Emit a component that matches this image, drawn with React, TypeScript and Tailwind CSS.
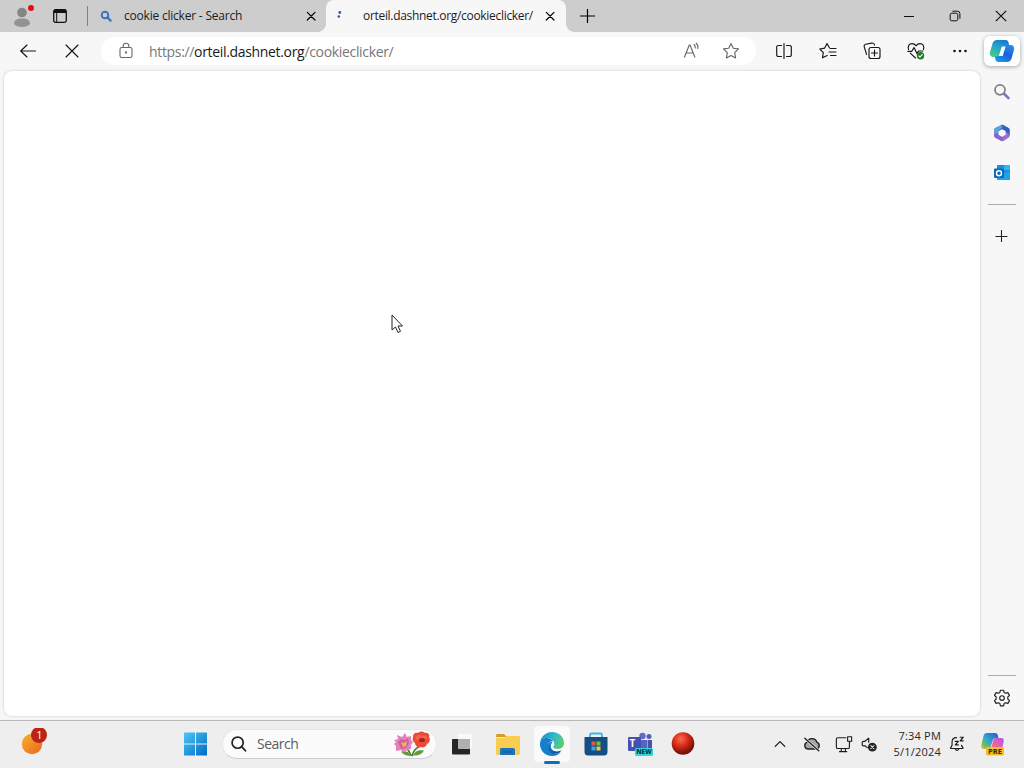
import type { ReactNode } from "react";

type IconProps = {
  size?: number;
  className?: string;
  children: ReactNode;
};

// Thin outlined icon, 20x20 grid
function Icon({ size = 20, className = "", children }: IconProps) {
  return (
    <svg
      width={size}
      height={size}
      viewBox="0 0 20 20"
      fill="none"
      stroke="currentColor"
      strokeWidth="1.15"
      strokeLinecap="round"
      strokeLinejoin="round"
      className={`shrink-0 ${className}`}
    >
      {children}
    </svg>
  );
}

const STAR =
  "M10 2.4l2.3 4.8 5.2.7-3.8 3.7.9 5.3-4.6-2.5-4.6 2.5.9-5.3-3.8-3.7 5.2-.7z";

function CloseIcon() {
  return (
    <Icon size={16}>
      <path d="M5.400 5.400l9.600 9.600M15 5.400l-9.600 9.600" strokeWidth="1.5" />
    </Icon>
  );
}

function TabBar() {
  return (
    <header className="flex h-8 w-full shrink-0 bg-[#cdcdcd]">
      <div className="flex w-[87px] items-center pl-3">
        <svg width="24" height="28" viewBox="0 0 24 28">
          <circle cx="10" cy="10.500" r="4.800" fill="#858585" />
          <path d="M2 22c0-4 3-5.500 8-5.500s8 1.500 8 5.500c-2 2.300-5 3-8 3s-6-.7-8-3z" fill="#929292" />
          <circle cx="19" cy="6" r="3" fill="#e60d12" />
        </svg>
        <svg width="14" height="14" viewBox="0 0 14 14" className="ml-[17px]">
          <rect x=".7" y=".7" width="12.600" height="12.600" rx="1.800" fill="none" stroke="#111" strokeWidth="1.300" />
          <path d="M1 1h12v3H1z" fill="#111" />
          <path d="M3.700 4v9" stroke="#111" strokeWidth="1" />
        </svg>
      </div>
      <div className="mt-1.5 h-5 w-px bg-[#808080]" />
      <div className="flex w-[238px] items-center pl-[11px]">
        <svg width="14" height="14" viewBox="0 0 14 14" fill="none" stroke="#3b72c0">
          <circle cx="6" cy="6" r="3.300" strokeWidth="1.900" />
          <path d="M8.600 8.600l3 3" strokeWidth="2.200" strokeLinecap="round" />
        </svg>
        <span className="ml-[11px] w-[179px] text-[12px] tracking-[-0.21px] text-[#1c1c1c]">
          cookie clicker - Search
        </span>
        <CloseIcon />
      </div>
      <div className="relative flex w-[240px] items-center rounded-t-lg bg-[#f7f7f7] pl-[9px]">
        <span className="absolute bottom-0 -left-2 size-2 bg-[radial-gradient(circle_at_0_0,#cdcdcd_7.5px,#f7f7f7_8px)]" />
        <span className="absolute -right-2 bottom-0 size-2 bg-[radial-gradient(circle_at_100%_0,#cdcdcd_7.5px,#f7f7f7_8px)]" />
        <svg width="8" height="12" viewBox="0 0 8 12" fill="#2b5d94">
          <circle cx="4.800" cy="2.500" r="1.400" />
          <circle cx="3.800" cy="6.500" r="1.300" />
        </svg>
        <span className="ml-5 w-[179px] text-[12px] tracking-[-0.31px] text-[#1c1c1c]">
          orteil.dashnet.org/cookieclicker/
        </span>
        <CloseIcon />
      </div>
      <div className="flex flex-1 items-center pl-[13px] text-black">
        <svg width="16" height="16" viewBox="0 0 16 16" stroke="currentColor" strokeWidth="1.200">
          <path d="M8.500 1v14M1 8h15" />
        </svg>
      </div>
      <div className="flex text-[#111]">
        <div className="flex w-[46px] items-center justify-center">
          <span className="h-px w-2.5 bg-[#111]" />
        </div>
        <div className="flex w-[46px] items-center justify-center">
          <svg width="12" height="12" viewBox="0 0 12 12" fill="none" stroke="currentColor">
            <rect x="1.200" y="3.200" width="7.600" height="7.600" rx="1.600" />
            <path d="M3.400 1.200h5A2.500 2.500 0 0 1 10.900 3.700v5" />
          </svg>
        </div>
        <div className="flex w-[46px] items-center justify-center">
          <svg width="12" height="12" viewBox="0 0 12 12" stroke="currentColor" strokeWidth="1.200">
            <path d="M.8.8l10.400 10.400M11.200.8L.8 11.200" />
          </svg>
        </div>
      </div>
    </header>
  );
}

function CopilotLogo() {
  return (
    <svg width="26" height="24" viewBox="0 0 26 24">
      <defs>
        <linearGradient id="cpLeft" x1=".7" y1="0" x2=".3" y2="1">
          <stop offset="0" stopColor="#1478d4" />
          <stop offset=".45" stopColor="#22a5c9" />
          <stop offset="1" stopColor="#4ccb86" />
        </linearGradient>
        <linearGradient id="cpRight" x1=".8" y1="0" x2=".2" y2="1">
          <stop offset="0" stopColor="#2b8ee8" />
          <stop offset=".5" stopColor="#1d5fdb" />
          <stop offset="1" stopColor="#139df0" />
        </linearGradient>
      </defs>
      <path d="M8 1h8.500c2 0 2.700 1 3.200 3l.6 2.500H18c-2 0-3.300 1-4 3l-2.300 6.500c-.5 1.500-1.300 2-2.700 2H4.500C1.500 18 .3 15.800 1 13L3.500 4.500C4.200 2.200 5.500 1 8 1z" fill="url(#cpLeft)" />
      <path d="M18 23H9.500c-2 0-2.700-1-3.200-3L5.700 17.500H8c2 0 3.300-1 4-3L14.300 8c.5-1.500 1.300-2 2.700-2h4.500c3 0 4.200 2.200 3.500 5l-2.500 8.500C21.800 21.800 20.500 23 18 23z" fill="url(#cpRight)" />
      <path d="M12.800 7.500h3.900l-3 9.500H9.800z" fill="#f2fbff" />
    </svg>
  );
}

function ToolButton({ children }: { children: ReactNode }) {
  return (
    <div className="flex w-11 items-center justify-center text-[#161616]">
      {children}
    </div>
  );
}

function Toolbar() {
  return (
    <nav className="flex h-[38px] w-full shrink-0 bg-[#f7f7f7] pl-1.5">
      <ToolButton>
        <Icon>
          <path d="M17.500 10H3M9 4l-6.300 6L9 16" />
        </Icon>
      </ToolButton>
      <ToolButton>
        <Icon>
          <path d="M4 4l12 12M16 4L4 16" />
        </Icon>
      </ToolButton>
      <div className="mt-[5px] ml-[7px] flex h-7 w-[655px] items-center rounded-full bg-white pl-4 text-[#686868]">
        <svg width="18" height="18" viewBox="0 0 18 18" fill="none" stroke="currentColor" strokeWidth="1.100">
          <rect x="3" y="5.500" width="12" height="10" rx="1.800" />
          <path d="M6.200 5.500V4a2.800 2.800 0 0 1 5.600 0v1.500" />
          <circle cx="9" cy="10.500" r=".6" fill="currentColor" />
        </svg>
        <span className="ml-3.5 flex-1 text-[14px] tracking-[-0.33px] text-[#777]">
          https://<span className="text-[#191919]">orteil.dashnet.org</span>/cookieclicker/
        </span>
        <Icon className="mr-[19px]">
          <path d="M2.500 16L7.300 4h.7L12.800 16M4.200 12h7M12 3.500c1 .9 1.500 2 1.300 3.500M14.200 2.300c1.500 1.300 2 3.200 1.600 5.200" />
        </Icon>
        <Icon className="mr-[15px]">
          <path d={STAR} />
        </Icon>
      </div>
      <div className="ml-1.5 flex">
        <ToolButton>
          <Icon>
            <path d="M10 2.500v15M7.500 4.500H4.300a1.600 1.600 0 0 0-1.600 1.600v7.800a1.600 1.600 0 0 0 1.600 1.600h3.200M12.500 4.500h3.200a1.600 1.600 0 0 1 1.600 1.600v7.800a1.600 1.600 0 0 1-1.600 1.600h-3.200" />
          </Icon>
        </ToolButton>
        <ToolButton>
          <Icon>
            <path d="M11.500 7L9 2.500 6.700 7.100 1.800 8l3.500 3.600-.8 5.200 4.700-2.400M12.500 7.500H18M11 11h7M12.500 14.500H18" />
          </Icon>
        </ToolButton>
        <ToolButton>
          <Icon>
            <rect x="7" y="6.500" width="11" height="11" rx="2" />
            <path d="M12.500 9v6M9.500 12h6M4.600 13.400L2.300 6.200C1.800 4.700 2.400 3.700 3.800 3.300L9.600 2.100c1.400-.3 2.400.2 2.800 1.500l.1.400" />
          </Icon>
        </ToolButton>
        <ToolButton>
          <Icon>
            <path d="M2.600 8.500C1.300 4.800 3.600 2.600 6 2.600c1.900 0 3.200 1 4 2.200.8-1.200 2.100-2.200 4-2.200 2.700 0 4.700 2.500 3.500 5.900M1.800 10.300h4L8 6.600l3 6 1.500-2.600H17M4.300 12.200L9.500 17" />
            <circle cx="14.500" cy="14.800" r="3.700" fill="#13801c" stroke="none" />
            <path d="M12.900 15l1.100 1.100 2.200-2.500" stroke="#fff" />
          </Icon>
        </ToolButton>
        <ToolButton>
          <svg width="16" height="4" viewBox="0 0 16 4" fill="currentColor">
            <circle cx="2.500" cy="2" r="1.300" />
            <circle cx="8" cy="2" r="1.300" />
            <circle cx="13.500" cy="2" r="1.300" />
          </svg>
        </ToolButton>
      </div>
      <div className="mt-1 ml-0.5 flex h-[30px] w-9 items-center justify-center rounded-md bg-white shadow-[0_1px_4px_#00000055]">
        <CopilotLogo />
      </div>
    </nav>
  );
}

function Sidebar() {
  return (
    <aside className="flex w-11 shrink-0 flex-col items-center">
      <svg width="18" height="18" viewBox="0 0 18 18" fill="none" className="mt-[13px]">
        <circle cx="7" cy="6.800" r="5" stroke="#828282" strokeWidth="1.800" />
        <path d="M11.300 11l4.200 4.200" stroke="#8173c4" strokeWidth="2.600" strokeLinecap="round" />
      </svg>
      <svg width="18" height="18" viewBox="0 0 18 18" className="mt-[23px]">
        <path d="M10 .7L3 3.500C1.500 4.300 1 5.300 1 6.500V12l4.500-1V7.500L11.500 4z" fill="#7b62cc" />
        <path d="M8 1.200c.8-.5 1.500-.5 2.300-.1l5 2.700c1 .6 1.500 1.400 1.500 2.500v5.500l-4.300-3V7L7 4z" fill="#3460bb" />
        <path d="M16.800 11c0 1.300-.5 2.200-1.400 2.800L10.500 17c-.8.500-1.600.4-2.300 0L6 15.500l.5-4L9 12.700l3.700-2.200V7.500z" fill="#9670d4" />
        <path d="M1 9.500l4.500 1 4.500 2.700L8.700 17 2.500 14C1.500 13.500 1 12.500 1 11.500z" fill="#8a63ce" />
        <path d="M3.500 3.200L8 1.200l2 1.800-4.500 3.500V9L1 10V6.500c0-1.500.8-2.500 2.500-3.300z" fill="#59a3e2" />
        <path d="M9 5.500l3.300 1.800v3.500L9 12.700l-3.300-1.900V7.300z" fill="#f7f7f7" />
      </svg>
      <svg width="18" height="18" viewBox="0 0 18 18" className="mt-[22px]">
        <rect x="4" y="1" width="13" height="15" rx="1" fill="#1490df" />
        <path d="M11 1h5a1 1 0 0 1 1 1v4h-6z" fill="#32b8ef" />
        <path d="M4 10l13-2v7a1 1 0 0 1-1 1H5a1 1 0 0 1-1-1z" fill="#22a1e5" />
        <rect x="1" y="4.500" width="10" height="9.500" rx="1" fill="#0769b7" />
        <circle cx="6" cy="9.200" r="2.500" fill="none" stroke="#fff" strokeWidth="1.400" />
      </svg>
      <div className="mt-[22px] h-px w-7 shrink-0 bg-[#adadad]" />
      <svg width="14" height="14" viewBox="0 0 14 14" stroke="#222" strokeWidth="1.100" className="mt-6">
        <path d="M6.500 1v12M.5 7.500h12" />
      </svg>
      <div className="mt-auto h-px w-7 shrink-0 bg-[#adadad]" />
      <Icon className="mt-3 mb-3 text-[#222]">
        <path d="M8.400 2.200h3.200l.5 2.200 1.600.9 2.200-.7 1.600 2.800-1.700 1.600v2l1.700 1.600-1.600 2.800-2.200-.7-1.600.9-.5 2.200H8.400l-.5-2.200-1.600-.9-2.200.7-1.600-2.800L4.200 11V9L2.500 7.400l1.600-2.800 2.200.7 1.600-.9z" />
        <circle cx="10" cy="10" r="2.300" />
      </Icon>
    </aside>
  );
}

function Flowers() {
  return (
    <svg width="38" height="26" viewBox="0 0 38 26">
      <path d="M11 16q5 2 7 9M28 15q-7 2-9 10" fill="none" stroke="#477b31" strokeWidth="1.600" />
      <path d="M18 24.500c-2-4-5-5-10-4 2 3 6 5 10 4zM20 24.500c2-5 6-6 11-5-2 4-6 5.500-11 5z" fill="#659a3b" />
      <path d="M1 9l4-1-1-4 5 2 3-4 2 4 4-1v4l2 2-2 3v4l-4 1-3 2-3-2-5 1V15l-2-2 2-2z" fill="#e284bb" />
      <path d="M5 11l3-3 4 1 3-2 1 5-3 5-5 1z" fill="#d0609c" />
      <path d="M8 11l3 1 3-2-1 5-3 1z" fill="#f0b35b" />
      <path d="M20 6c0-3 2-5 5-4 2-2 5-2 7 0 3-1 5 2 4 4 2 3 0 6-2 7-1 3-4 4-6 3-3 1-6-1-6-4-2-1-3-4-2-6z" fill="#e94b35" />
      <path d="M22 6q4-4 7-1 4-2 5 2-1 3-5 2-5 2-7-3z" fill="#f36549" />
      <ellipse cx="29" cy="9" rx="3" ry="2" fill="#a91e22" />
    </svg>
  );
}

function WindowsLogo() {
  return (
    <svg width="24" height="24" viewBox="0 0 24 24">
      <defs>
        <linearGradient id="win" x1="0" y1="0" x2="1" y2="1">
          <stop offset="0" stopColor="#4ec7f5" />
          <stop offset="1" stopColor="#0069c5" />
        </linearGradient>
      </defs>
      <path d="M1 .500h11v11H1zM13 .500h11v11H13zM1 12.500h11v11H1zM13 12.500h11v11H13z" fill="url(#win)" />
    </svg>
  );
}

function EdgeLogo() {
  return (
    <svg width="26" height="26" viewBox="0 0 26 26">
      <defs>
        <linearGradient id="edgeTop" x1="0" y1=".3" x2="1" y2=".6">
          <stop offset="0" stopColor="#1595d2" />
          <stop offset=".6" stopColor="#35bec2" />
          <stop offset="1" stopColor="#62cd61" />
        </linearGradient>
        <linearGradient id="edgeLow" x1="0" y1="0" x2="1" y2="1">
          <stop offset="0" stopColor="#1683cd" />
          <stop offset="1" stopColor="#104793" />
        </linearGradient>
      </defs>
      <path d="M1 12C2 5 7 1 13 1c7 0 12 5 12 11 0 4-3 6-6.500 6-3 0-4.500-1-4.500-2 0-.7 1.200-1 1.200-3C15.200 9 11 7 7.500 7 4 7 1.500 9.500 1 12z" fill="url(#edgeTop)" />
      <path d="M1 13c0-4 3-6 6.500-6 3 0 5.500 1.300 6.700 3.300C11 9.500 9 12 9 15c0 4 4 8 9 7.500l4-2C20 23.500 17 25 13 25 6 25 1 19.500 1 13z" fill="#1580c8" />
      <path d="M9.500 12.500C7 18 11 24 17.500 22.500c2.200-.5 4.500-2 5.300-3.500-5 3-10.800 1-11-3.500 0-2 .8-3.500 1.800-4.500-1.600-.3-3.200.2-4.100 1.500z" fill="url(#edgeLow)" />
      <path d="M14.300 11c1 1.300 1.300 3 .3 4.300-.7 1-.6 1.500.4 2.100 1.600.8 4.500.8 6.400-.1-4 2.500-9 1.200-9-2.100 0-1.700.7-3.200 1.900-4.200z" fill="#f1f8fc" />
    </svg>
  );
}

function CopilotPre() {
  return (
    <svg width="26" height="26" viewBox="0 0 26 26">
      <defs>
        <linearGradient id="preLeft" x1="1" y1="0" x2="0" y2="1">
          <stop offset="0" stopColor="#2658cf" />
          <stop offset=".5" stopColor="#2da3d1" />
          <stop offset=".8" stopColor="#75bd58" />
          <stop offset="1" stopColor="#efc52e" />
        </linearGradient>
        <linearGradient id="preRight" x1="1" y1="0" x2="0" y2="1">
          <stop offset="0" stopColor="#a65be8" />
          <stop offset=".5" stopColor="#e65bb8" />
          <stop offset="1" stopColor="#f77d62" />
        </linearGradient>
      </defs>
      <path d="M7 2h8c2 0 2.500 1 3 3l.5 2H16c-2 0-3 1-3.500 3L11 15c-.5 2-1.500 3-3.500 3H4c-2.500 0-3.200-2-2.600-4L3.500 5C4 3 5 2 7 2z" fill="url(#preLeft)" />
      <path d="M16 7h5c2.500 0 3.200 1.500 2.600 4L22 18H11l2-8c.5-2 1.200-3 3-3z" fill="url(#preRight)" />
      <rect x="6" y="16" width="18" height="8.500" rx="1.500" fill="#f5bc23" />
      <text x="15" y="23" textAnchor="middle" fontSize="7.500" fontWeight="700" fill="#332500">
        PRE
      </text>
    </svg>
  );
}

function Taskbar() {
  return (
    <footer className="flex h-12 w-full shrink-0 items-center border-t border-[#b8b8b8] bg-[#eeeeee] pb-[2px]">
      <div className="flex w-[183px] pl-5">
        <svg width="28" height="32" viewBox="0 0 28 32">
          <defs>
            <linearGradient id="sun" x1="0" y1="0" x2="1" y2="1">
              <stop offset="0" stopColor="#f5b332" />
              <stop offset="1" stopColor="#ed6416" />
            </linearGradient>
          </defs>
          <circle cx="12" cy="16" r="10.200" fill="url(#sun)" />
          <circle cx="19" cy="7" r="8" fill="#bd2418" />
          <text x="19.500" y="11" fontSize="11" textAnchor="middle" fill="#fff">
            1
          </text>
        </svg>
      </div>
      <WindowsLogo />
      <div className="ml-[15px] flex h-[30px] w-[215px] items-center rounded-full border border-[#e7e7e7] border-b-[#cccccc] bg-[#fbfbfb] pl-[7px]">
        <Icon size={18} className="text-[#222]">
          <circle cx="8.500" cy="8.500" r="6.200" strokeWidth="1.900" />
          <path d="M13.200 13.200l4 4.300" strokeWidth="2" />
        </Icon>
        <span className="ml-[9px] w-[136px] text-[14px] tracking-[-0.5px] text-[#5c5c5c]">
          Search
        </span>
        <Flowers />
      </div>
      <div className="ml-[2px] flex items-center">
        <div className="flex w-11 justify-center">
          <svg width="24" height="24" viewBox="0 0 24 24">
            <rect x="9" y="2" width="14" height="14" rx="1" fill="#fafafa" />
            <rect x="3" y="7" width="18" height="15.500" rx="1" fill="#252525" />
            <path d="M9 7h12v10H10a1 1 0 0 1-1-1z" fill="#b0b0b0" />
          </svg>
        </div>
        <div className="ml-[3px] flex w-11 justify-center">
          <svg width="26" height="24" viewBox="0 0 26 24">
            <path d="M1 4c0-1.500.5-2 2-2h6l3 3H1z" fill="#d79b22" />
            <path d="M1 6h8l3-2h11c1.500 0 2 .6 2 2v15c0 1.500-.7 2-2 2H3c-1.500 0-2-.6-2-2z" fill="#f9cd51" />
            <path d="M5 23v-5c0-1.400.8-2 2-2h11c1.400 0 2 .7 2 2v5z" fill="#1974bd" />
            <path d="M8 20h9" stroke="#155693" />
          </svg>
        </div>
        <div className="relative mx-1 flex h-9 w-9 items-center justify-center rounded bg-[#fafafa]">
          <EdgeLogo />
          <span className="absolute -bottom-0.5 left-2.5 h-[3px] w-4 rounded-full bg-[#086fc2]" />
        </div>
        <div className="flex w-11 justify-center">
          <svg width="24" height="24" viewBox="0 0 24 24">
            <path d="M6 6V3c0-1 .5-1.500 1.500-1.500h9c1 0 1.500.5 1.500 1.500v3" fill="none" stroke="#41b4e5" strokeWidth="1.800" />
            <path d="M.5 5h23v15c0 2.500-1.500 3.500-3.500 3.500H4c-2 0-3.500-1-3.500-3.500z" fill="#144f83" />
            <path d="M7.500 9.500h4v4h-4z" fill="#f25535" />
            <path d="M12.500 9.500h4v4h-4z" fill="#80bd34" />
            <path d="M7.500 14.500h4v4h-4z" fill="#33a9e6" />
            <path d="M12.500 14.500h4v4h-4z" fill="#f9c334" />
          </svg>
        </div>
        <div className="flex w-11 justify-center">
          <svg width="26" height="24" viewBox="0 0 26 24">
            <circle cx="15.500" cy="4" r="3.200" fill="#646bc7" />
            <circle cx="22" cy="4.500" r="2.500" fill="#545dbc" />
            <path d="M12 8h8v11h-8z" fill="#5961c2" />
            <path d="M20.500 8H25v8c0 2-2 3-4.500 3z" fill="#4b50ad" />
            <rect x="1" y="5" width="13" height="14" rx="1" fill="#4650b1" />
            <text x="5.500" y="15" fontSize="10" fontWeight="700" textAnchor="middle" fill="#fff">
              T
            </text>
            <rect x="8" y="16" width="18" height="8" rx="1.500" fill="#2adade" />
            <text x="17" y="22.400" fontSize="6.500" fontWeight="800" textAnchor="middle" fill="#083b42">
              NEW
            </text>
          </svg>
        </div>
        <div className="flex w-[42px] justify-center">
          <svg width="24" height="24" viewBox="0 0 24 24">
            <defs>
              <radialGradient id="ball" cx=".4" cy=".3" r=".65">
                <stop offset="0" stopColor="#fb6b50" />
                <stop offset=".5" stopColor="#d92a18" />
                <stop offset="1" stopColor="#751008" />
              </radialGradient>
            </defs>
            <circle cx="12" cy="11.500" r="11.300" fill="url(#ball)" />
          </svg>
        </div>
      </div>
      <div className="ml-auto flex items-center pr-[18px] text-[#1c1c1c]">
        <Icon size={16} className="mr-[15px]">
          <path d="M4 13l6-6 6 6" strokeWidth="1.600" />
        </Icon>
        <Icon size={18} className="mr-[14px]">
          <path d="M5 15.500a3.900 3.900 0 0 1-.3-7.500C5.300 5.500 7.500 4 10 4s4.700 1.500 5.300 4a3.900 3.900 0 0 1-.3 7.500z" fill="#a5a5a5" strokeWidth="1.500" />
          <path d="M2 3.500l15.500 14" stroke="#eee" strokeWidth="3" />
          <path d="M2 3.500l15.500 14" strokeWidth="1.500" />
        </Icon>
        <Icon size={18} className="mr-[7px]">
          <path d="M12 3H3C2 3 1.500 3.500 1.500 4.500v9c0 1 .5 1.500 1.500 1.500h11.500c1 0 1.500-.5 1.500-1.500V8M5 18.500h8M7 15v3.500M11.500 15v3.500M14 2h4.500v5H14zM16.200 7v2" strokeWidth="1.250" />
        </Icon>
        <Icon size={18}>
          <path d="M8 14L5.500 12H4c-1 0-1.500-.4-1.500-1.300V8.300C2.500 7.400 3 7 4 7h1.500L9.700 3.500V8" strokeWidth="1.300" />
          <circle cx="13.700" cy="13.500" r="4.900" fill="#222" stroke="none" />
          <path d="M12 11.800l3.400 3.400M15.400 11.800L12 15.200" stroke="#eee" />
        </Icon>
        <div className="w-[63px] text-right text-[11px] leading-4 text-[#272727]">
          <p className="tracking-[0.2px]">7:34 PM</p>
          <p className="tracking-[0.22px]">5/1/2024</p>
        </div>
        <Icon size={18} className="ml-[7px]">
          <path d="M9.500 3C6.500 3 4.500 5.200 4.500 8v3.500L3 14v1h13.500v-1L15 11.500M8 15.500c.4 2 3.600 2 4 0M8 7h3.500L8 11h3.500M13.500 2.500H17l-3.500 4H17" strokeWidth="1.300" />
        </Icon>
        <div className="ml-3.5">
          <CopilotPre />
        </div>
      </div>
    </footer>
  );
}

export default function App() {
  return (
    <div className="flex h-[768px] w-[1024px] flex-col overflow-hidden bg-[#f7f7f7] font-['Open_Sans','Noto_Sans',sans-serif]">
      <TabBar />
      <Toolbar />
      <div className="flex min-h-0 flex-1">
        <main className="relative mt-px mb-1 ml-1 flex-1 rounded-lg bg-white shadow-[0_0_3px_#00000030]">
          <svg width="13" height="20" viewBox="0 0 13 20" className="absolute top-[243px] left-[387px]">
            <path d="M1 1v15l3.500-3 2.500 5.500 2.500-1.200L7 12h4.500z" fill="#fff" stroke="#222" strokeLinejoin="round" />
          </svg>
        </main>
        <Sidebar />
      </div>
      <Taskbar />
    </div>
  );
}
